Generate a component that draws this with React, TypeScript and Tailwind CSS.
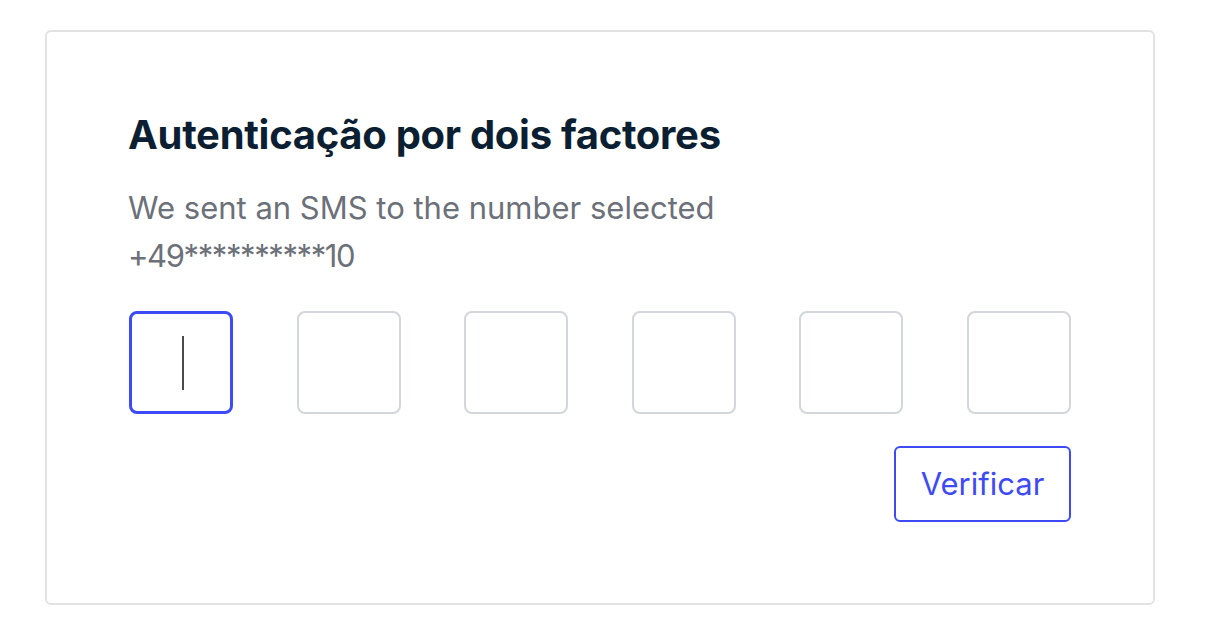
import { useState } from "react";

const DIGITS = 6;

function CodeBox({ active }: { active: boolean }) {
  return (
    <div
      className={
        active
          ? "relative h-[103px] w-[104px] rounded-lg border-[3px] border-[#3d4af5] bg-white"
          : "relative h-[103px] w-[104px] rounded-lg border-2 border-[#d3d6db] bg-white"
      }
    >
      {active && (
        <span className="absolute left-[50px] top-[22px] h-[54px] w-[2px] bg-[#4b4b4f]" />
      )}
    </div>
  );
}

export default function App() {
  const [focused] = useState(0);

  return (
    <div className="min-h-[642px] bg-white pt-[30px] pl-[45px]" style={{ fontFamily: "Inter, 'Noto Sans', sans-serif" }}>
      <div className="w-[1110px] h-[575px] rounded-md border-2 border-[#e2e2e2] bg-white pl-[82px] pr-[82px] pt-[79px]">
        <h1 className="-ml-[1px] text-[40px] leading-[48px] font-bold tracking-[-0.3px] text-[#0c1f32]">
          Autenticação por dois factores
        </h1>
        <p className="-ml-[1px] mt-[25px] text-[31px] leading-[48px] text-[#6c7079]">
          We sent an SMS to the number selected
          <br />
          <span className="tracking-[-1.4px]">+49**********10</span>
        </p>
        <div className="mt-[31px] flex justify-between">
          {Array.from({ length: DIGITS }).map((_, i) => (
            <CodeBox key={i} active={i === focused} />
          ))}
        </div>
        <div className="mt-[32px] flex justify-end">
          <button className="h-[76px] w-[177px] rounded-md border-2 border-[#3d4af5] text-[31px] text-[#3d4af5]">
            Verificar
          </button>
        </div>
      </div>
    </div>
  );
}
